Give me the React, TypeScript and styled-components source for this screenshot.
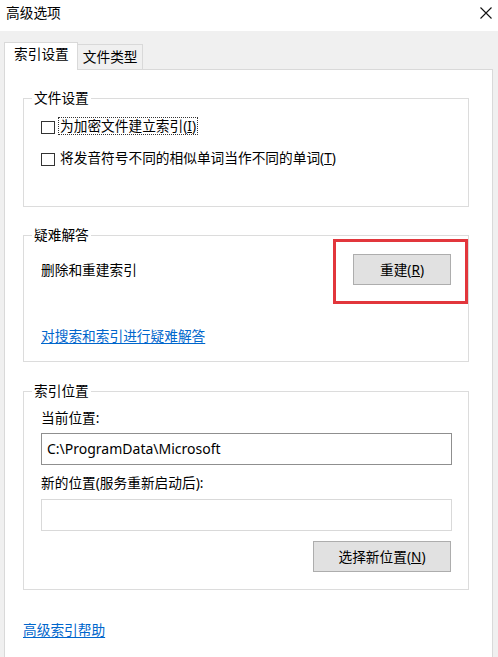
import React from "react";
import styled, { createGlobalStyle } from "styled-components";

const Global = createGlobalStyle`
  html, body { margin: 0; padding: 0; }
  body {
    font-family: "Noto Sans", "Noto Sans CJK SC", sans-serif;
    font-size: 13.7px;
    color: #000;
    background: #f0f0f0;
  }
  * { box-sizing: border-box; }
`;

const Window = styled.div`
  width: 498px;
  height: 657px;
  display: flex;
  flex-direction: column;
  overflow: hidden;
  background: #f0f0f0;
`;

const TitleBar = styled.div`
  height: 31px;
  flex: none;
  background: #fff;
  display: flex;
  justify-content: space-between;
  align-items: flex-start;
  padding: 3px 6px 0 6px;
  line-height: 20px;
`;

const CloseIcon = styled.svg`
  margin-top: 4px;
  width: 12px;
  height: 12px;
`;

const Body = styled.div`
  flex: 1;
  display: flex;
  flex-direction: column;
  padding: 11px 5px 0 4px;
  min-height: 0;
`;

const TabStrip = styled.div`
  display: flex;
  align-items: flex-end;
  height: 27px;
  flex: none;
  position: relative;
  z-index: 1;
`;

const Tab = styled.div<{ $active?: boolean }>`
  line-height: 20px;
  border: 1px solid #d9d9d9;
  border-bottom: none;
  ${(p) =>
    p.$active
      ? `
    height: 28px;
    margin-bottom: -1px;
    background: #fff;
    padding: 1px 8px 0 9px;
  `
      : `
    height: 25px;
    background: #f0f0f0;
    border-left: none;
    padding: 2px 4px 0 5px;
  `}
`;

const Panel = styled.div`
  flex: 1;
  background: #fff;
  border: 1px solid #d9d9d9;
  border-bottom: none;
  padding: 28px 23px 0 18px;
  display: flex;
  flex-direction: column;
`;

const Group = styled.div<{ $pt: number; $pb: number; $mt: number }>`
  position: relative;
  border: 1px solid #dcdcdc;
  margin-top: ${(p) => p.$mt}px;
  padding: ${(p) => p.$pt}px 16px ${(p) => p.$pb}px 17px;
  display: flex;
  flex-direction: column;
  line-height: 20px;
`;

const GroupTitle = styled.span`
  position: absolute;
  top: -11px;
  left: 8px;
  padding: 0 2px;
  background: #fff;
  line-height: 20px;
`;

const CheckRow = styled.label<{ $mt?: number }>`
  display: flex;
  align-items: center;
  height: 20px;
  margin-top: ${(p) => p.$mt ?? 0}px;
`;

const Box = styled.span`
  width: 14px;
  height: 13px;
  border: 1px solid #333;
  background: #fff;
  margin-top: 2px;
  margin-right: 3px;
  flex: none;
`;

const CheckText = styled.span<{ $focus?: boolean }>`
  line-height: 16px;
  padding: 0 1px;
  border: 1px ${(p) => (p.$focus ? "dotted #333" : "solid transparent")};
`;

const ActionRow = styled.div`
  display: flex;
  align-items: center;
  justify-content: space-between;
  height: 31px;
`;

const Annotated = styled.div`
  position: relative;
  margin-right: 1px;
  display: flex;
`;

const Highlight = styled.div`
  position: absolute;
  top: -15px;
  left: -20px;
  right: -17px;
  bottom: -19px;
  border: 3px solid #e2363c;
  pointer-events: none;
`;

const Button = styled.button<{ $w: number }>`
  width: ${(p) => p.$w}px;
  height: 31px;
  background: #e1e1e1;
  border: 1px solid #adadad;
  font: inherit;
  font-size: 13.7px;
  line-height: 20px;
  color: #000;
  padding: 0;
`;

const Link = styled.a<{ $mt: number }>`
  color: #0066cc;
  text-decoration: underline;
  text-underline-offset: 2px;
  line-height: 20px;
  margin-top: ${(p) => p.$mt}px;
  align-self: flex-start;
  cursor: pointer;
`;

const FieldLabel = styled.div<{ $mt?: number }>`
  line-height: 20px;
  margin-top: ${(p) => p.$mt ?? 0}px;
`;

const Input = styled.div<{ $disabled?: boolean; $mt: number }>`
  height: 32px;
  margin-top: ${(p) => p.$mt}px;
  border: 1px solid ${(p) => (p.$disabled ? "#d9d9d9" : "#8f8f8f")};
  background: #fff;
  padding: 0 5px;
  display: flex;
  align-items: center;
  font-size: 14px;
  line-height: 20px;
`;

const RightButtonRow = styled.div`
  display: flex;
  justify-content: flex-end;
  margin-top: 10px;
  padding-right: 1px;
`;

export default function App() {
  return (
    <>
      <Global />
      <Window>
        <TitleBar>
          <span>高级选项</span>
          <CloseIcon viewBox="0 0 12 12">
            <path d="M0.5 0.5 L11.5 11.5 M11.5 0.5 L0.5 11.5" stroke="#111" strokeWidth="1.1" fill="none" />
          </CloseIcon>
        </TitleBar>
        <Body>
          <TabStrip>
            <Tab $active>索引设置</Tab>
            <Tab>文件类型</Tab>
          </TabStrip>
          <Panel>
            <Group $mt={0} $pt={17} $pb={38}>
              <GroupTitle>文件设置</GroupTitle>
              <CheckRow>
                <Box />
                <CheckText $focus>
                  为加密文件建立索引(<u>I</u>)
                </CheckText>
              </CheckRow>
              <CheckRow $mt={12}>
                <Box />
                <CheckText>
                  将发音符号不同的相似单词当作不同的单词(<u>T</u>)
                </CheckText>
              </CheckRow>
            </Group>

            <Group $mt={28} $pt={18} $pb={15}>
              <GroupTitle>疑难解答</GroupTitle>
              <ActionRow>
                <span>删除和重建索引</span>
                <Annotated>
                  <Button $w={98}>
                    重建(<u>R</u>)
                  </Button>
                  <Highlight />
                </Annotated>
              </ActionRow>
              <Link $mt={41}>对搜索和索引进行疑难解答</Link>
            </Group>

            <Group $mt={29} $pt={16} $pb={17}>
              <GroupTitle>索引位置</GroupTitle>
              <FieldLabel>当前位置:</FieldLabel>
              <Input $mt={5}>C:\ProgramData\Microsoft</Input>
              <FieldLabel $mt={8}>新的位置(服务重新启动后):</FieldLabel>
              <Input $mt={6} $disabled />
              <RightButtonRow>
                <Button $w={138}>
                  选择新位置(<u>N</u>)
                </Button>
              </RightButtonRow>
            </Group>

            <Link $mt={30}>高级索引帮助</Link>
          </Panel>
        </Body>
      </Window>
    </>
  );
}
